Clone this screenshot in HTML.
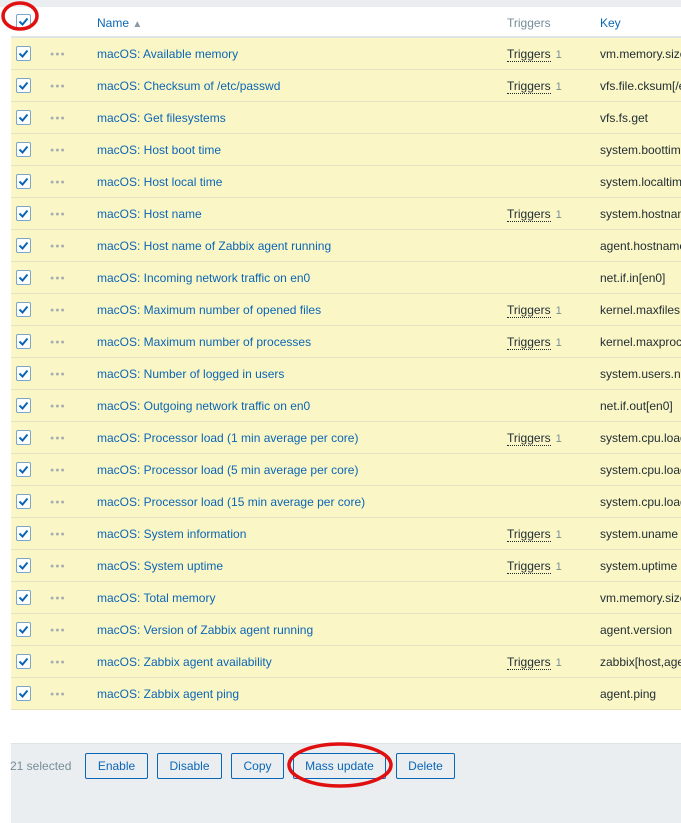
<!DOCTYPE html>
<html><head><style>
body{margin:0;width:681px;height:822px;background:#fff;font-family:"Liberation Sans",sans-serif;font-size:12px;position:relative;overflow:hidden;color:#1f2c33}
.top{position:absolute;left:0;top:0;width:681px;height:7px;background:#ebeef0}
.hdr{position:absolute;left:11px;top:7px;width:670px;height:29px;border-bottom:2px solid #dfe4e7}
.row{position:absolute;left:11px;width:670px;height:31px;background:#fbf6c5;border-bottom:1px solid #e6e3c5}
.cb{position:absolute;left:5px;width:13px;height:13px;border:1px solid #7aa6c8;background:#fff;border-radius:2px}
.cb svg{position:absolute;left:1px;top:2px}
.dots{position:absolute;left:39px;color:#a8adb0;font-size:7px;letter-spacing:1px}
.t{position:absolute;white-space:nowrap;line-height:14px}
.nm{left:86px;color:#0a66b7}
.tr{left:496px}
.tr span{border-bottom:1px dotted #1f2c33}
.tr i{font-style:normal;color:#768d99;font-size:11px;margin-left:5px}
.ky{left:589px}
.foot{position:absolute;left:11px;top:743px;width:670px;height:79px;background:#ebeef0;border-top:1px solid #dfe4e7}
.btn{position:absolute;top:753px;height:24px;border:1px solid #0a66b7;border-radius:2px;color:#0a66b7;background:#ebeef0;line-height:24px;text-align:center;font-size:12px}
</style></head><body>
<div class="top"></div>
<div class="hdr">
<div class="cb" style="top:7px"><svg width="11" height="9"><path d="M1.5 4.5l3 3 5-6" stroke="#0a66b7" stroke-width="2" fill="none"/></svg></div>
<div class="t nm" style="top:9px">Name <span style="color:#8a9aa5;font-size:10px">▲</span></div>
<div class="t" style="left:496px;top:9px;color:#768d99">Triggers</div>
<div class="t" style="left:589px;top:9px;color:#0a66b7">Key</div>
</div>
<div id="rows"></div>
<div class="foot"></div>
<div class="t" style="left:10px;top:759px;color:#768d99">21 selected</div>
<div class="btn" style="left:85px;width:61px">Enable</div>
<div class="btn" style="left:157px;width:63px">Disable</div>
<div class="btn" style="left:231px;width:51px">Copy</div>
<div class="btn" style="left:293px;width:91px">Mass update</div>
<div class="btn" style="left:396px;width:57px">Delete</div>
<svg style="position:absolute;left:0;top:0" width="681" height="822">
<ellipse cx="20" cy="16" rx="17" ry="13" stroke="#e01010" stroke-width="3.5" fill="none"/>
<ellipse cx="340" cy="765" rx="51" ry="21" stroke="#e01010" stroke-width="3.5" fill="none"/>
</svg>
<script>
var d=[["Available memory",1,"vm.memory.size"],["Checksum of /etc/passwd",1,"vfs.file.cksum[/etc"],["Get filesystems",0,"vfs.fs.get"],["Host boot time",0,"system.boottime"],["Host local time",0,"system.localtime"],["Host name",1,"system.hostname"],["Host name of Zabbix agent running",0,"agent.hostname"],["Incoming network traffic on en0",0,"net.if.in[en0]"],["Maximum number of opened files",1,"kernel.maxfiles"],["Maximum number of processes",1,"kernel.maxproc"],["Number of logged in users",0,"system.users.num"],["Outgoing network traffic on en0",0,"net.if.out[en0]"],["Processor load (1 min average per core)",1,"system.cpu.load"],["Processor load (5 min average per core)",0,"system.cpu.load"],["Processor load (15 min average per core)",0,"system.cpu.load"],["System information",1,"system.uname"],["System uptime",1,"system.uptime"],["Total memory",0,"vm.memory.size"],["Version of Zabbix agent running",0,"agent.version"],["Zabbix agent availability",1,"zabbix[host,agent"],["Zabbix agent ping",0,"agent.ping"]];
var h="";d.forEach(function(r,i){var y=38+i*32;h+='<div class="row" style="top:'+y+'px"><div class="cb" style="top:8px"><svg width="11" height="9"><path d="M1.5 4.5l3 3 5-6" stroke="#0a66b7" stroke-width="2" fill="none"/></svg></div><div class="t dots" style="top:10px">●●●</div><div class="t nm" style="top:9px">macOS: '+r[0]+'</div>'+(r[1]?'<div class="t tr" style="top:9px"><span>Triggers</span><i>1</i></div>':'')+'<div class="t ky" style="top:9px">'+r[2]+'</div></div>';});
document.getElementById("rows").innerHTML=h;
</script>
</body></html>
